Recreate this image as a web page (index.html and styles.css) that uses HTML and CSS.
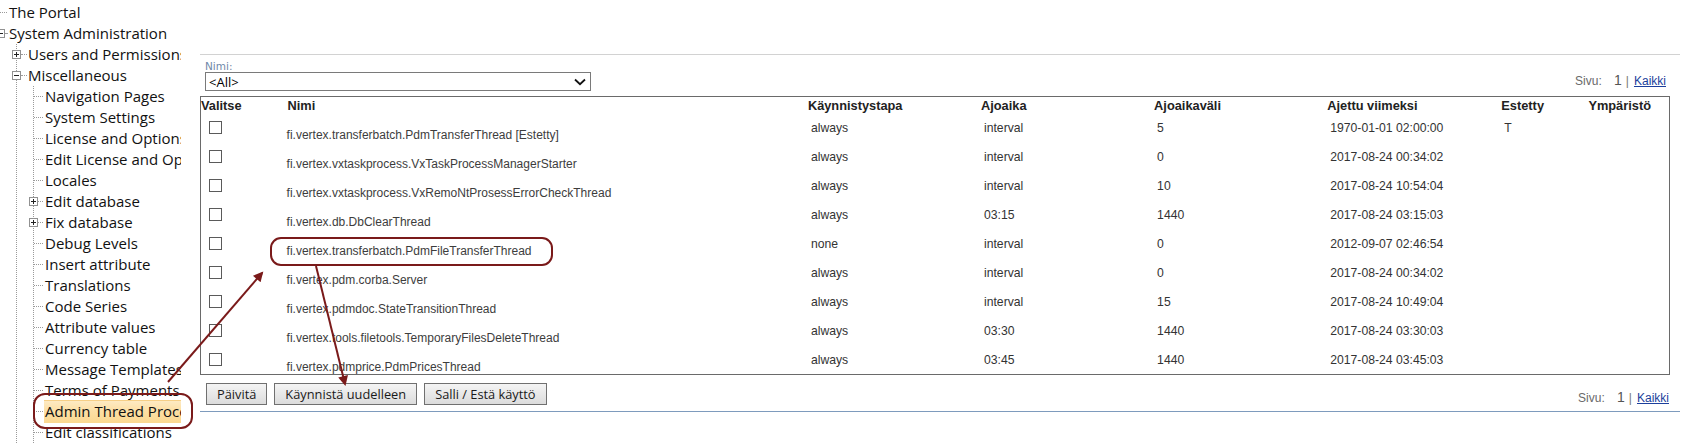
FILE: index.html
```html
<!DOCTYPE html>
<html lang="fi">
<head>
<meta charset="utf-8">
<title>Admin Thread Processes</title>
<link rel="stylesheet" href="styles.css">
</head>
<body>
<div class="page">
  <nav class="tree">
    <div class="row l0"><span class="hline w7"></span><span class="label">The Portal</span></div>
    <div class="row l0"><span class="box minus cut"></span><span class="hline w2"></span><span class="label">System Administration</span></div>
    <div class="group g1">
      <div class="row l1"><span class="box plus"></span><span class="hline w6"></span><span class="label">Users and Permissions</span></div>
      <div class="row l1"><span class="box minus"></span><span class="hline w6"></span><span class="label">Miscellaneous</span></div>
      <div class="group g2">
        <div class="row l2"><span class="hline w9"></span><span class="label">Navigation Pages</span></div>
        <div class="row l2"><span class="hline w9"></span><span class="label">System Settings</span></div>
        <div class="row l2"><span class="hline w9"></span><span class="label">License and Options</span></div>
        <div class="row l2"><span class="hline w9"></span><span class="label">Edit License and Options</span></div>
        <div class="row l2"><span class="hline w9"></span><span class="label">Locales</span></div>
        <div class="row l2b"><span class="box plus"></span><span class="hline w5"></span><span class="label">Edit database</span></div>
        <div class="row l2b"><span class="box plus"></span><span class="hline w5"></span><span class="label">Fix database</span></div>
        <div class="row l2"><span class="hline w9"></span><span class="label">Debug Levels</span></div>
        <div class="row l2"><span class="hline w9"></span><span class="label">Insert attribute</span></div>
        <div class="row l2"><span class="hline w9"></span><span class="label">Translations</span></div>
        <div class="row l2"><span class="hline w9"></span><span class="label">Code Series</span></div>
        <div class="row l2"><span class="hline w9"></span><span class="label">Attribute values</span></div>
        <div class="row l2"><span class="hline w9"></span><span class="label">Currency table</span></div>
        <div class="row l2"><span class="hline w9"></span><span class="label">Message Templates</span></div>
        <div class="row l2"><span class="hline w9"></span><span class="label">Terms of Payments</span></div>
        <div class="row l2"><span class="hline w9"></span><span class="label selected">Admin Thread Processes</span></div>
        <div class="row l2"><span class="hline w9"></span><span class="label">Edit classifications</span></div>
      </div>
    </div>
  </nav>

  <main class="main">
    <div class="rule-top"></div>
    <div class="filter-bar">
      <div class="filter">
        <label class="filter-label">Nimi:</label>
        <div class="select">
          <span>&lt;All&gt;</span>
          <svg class="chevron" width="12" height="8" viewBox="0 0 12 8"><path d="M1 1.5L6 6.2L11 1.5" fill="none" stroke="#111" stroke-width="1.8"/></svg>
        </div>
      </div>
      <div class="pager top">Sivu: <span class="num">1</span><span class="sep">|</span><a href="#">Kaikki</a></div>
    </div>

    <table class="grid">
      <colgroup>
        <col class="c-sel"><col class="c-name"><col class="c-start"><col class="c-time"><col class="c-int"><col class="c-last"><col class="c-dis"><col class="c-env">
      </colgroup>
      <thead>
        <tr><th>Valitse</th><th class="h-name">Nimi</th><th>Käynnistystapa</th><th>Ajoaika</th><th>Ajoaikaväli</th><th>Ajettu viimeksi</th><th>Estetty</th><th>Ympäristö</th></tr>
      </thead>
      <tbody>
        <tr><td class="sel"><input type="checkbox" class="cb"></td><td class="name">fi.vertex.transferbatch.PdmTransferThread [Estetty]</td><td>always</td><td>interval</td><td>5</td><td>1970-01-01 02:00:00</td><td>T</td><td></td></tr>
        <tr><td class="sel"><input type="checkbox" class="cb"></td><td class="name">fi.vertex.vxtaskprocess.VxTaskProcessManagerStarter</td><td>always</td><td>interval</td><td>0</td><td>2017-08-24 00:34:02</td><td></td><td></td></tr>
        <tr><td class="sel"><input type="checkbox" class="cb"></td><td class="name">fi.vertex.vxtaskprocess.VxRemoNtProsessErrorCheckThread</td><td>always</td><td>interval</td><td>10</td><td>2017-08-24 10:54:04</td><td></td><td></td></tr>
        <tr><td class="sel"><input type="checkbox" class="cb"></td><td class="name">fi.vertex.db.DbClearThread</td><td>always</td><td>03:15</td><td>1440</td><td>2017-08-24 03:15:03</td><td></td><td></td></tr>
        <tr><td class="sel"><input type="checkbox" class="cb"></td><td class="name">fi.vertex.transferbatch.PdmFileTransferThread</td><td>none</td><td>interval</td><td>0</td><td>2012-09-07 02:46:54</td><td></td><td></td></tr>
        <tr><td class="sel"><input type="checkbox" class="cb"></td><td class="name">fi.vertex.pdm.corba.Server</td><td>always</td><td>interval</td><td>0</td><td>2017-08-24 00:34:02</td><td></td><td></td></tr>
        <tr><td class="sel"><input type="checkbox" class="cb"></td><td class="name">fi.vertex.pdmdoc.StateTransitionThread</td><td>always</td><td>interval</td><td>15</td><td>2017-08-24 10:49:04</td><td></td><td></td></tr>
        <tr><td class="sel"><input type="checkbox" class="cb"></td><td class="name">fi.vertex.tools.filetools.TemporaryFilesDeleteThread</td><td>always</td><td>03:30</td><td>1440</td><td>2017-08-24 03:30:03</td><td></td><td></td></tr>
        <tr><td class="sel"><input type="checkbox" class="cb"></td><td class="name">fi.vertex.pdmprice.PdmPricesThread</td><td>always</td><td>03:45</td><td>1440</td><td>2017-08-24 03:45:03</td><td></td><td></td></tr>
      </tbody>
    </table>

    <div class="actions">
      <div class="buttons">
        <button class="btn">Päivitä</button>
        <button class="btn">Käynnistä uudelleen</button>
        <button class="btn">Salli / Estä käyttö</button>
      </div>
      <div class="pager bottom">Sivu: <span class="num">1</span><span class="sep">|</span><a href="#">Kaikki</a></div>
    </div>
    <div class="rule-bottom"></div>
  </main>
</div>

<svg class="annot" width="1682" height="448" viewBox="0 0 1682 448">
  <defs>
    <marker id="ah" viewBox="0 0 10 10" refX="8" refY="5" markerWidth="6" markerHeight="5" orient="auto">
      <path d="M0 0L10 5L0 10z" fill="#7a1a1a"/>
    </marker>
  </defs>
  <rect x="34" y="394" width="158" height="34" rx="11" fill="none" stroke="#7a1a1a" stroke-width="2"/>
  <rect x="271" y="238" width="281" height="27" rx="10" fill="none" stroke="#7a1a1a" stroke-width="2"/>
  <line x1="168" y1="382" x2="262" y2="273" stroke="#7a1a1a" stroke-width="2" marker-end="url(#ah)"/>
  <line x1="316" y1="266" x2="345" y2="384" stroke="#7a1a1a" stroke-width="2" marker-end="url(#ah)"/>
</svg>
</body>
</html>
```

FILE: styles.css
```css
html, body {
  margin: 0;
  padding: 0;
  background: #fff;
}

body {
  width: 1682px;
  height: 448px;
  overflow: hidden;
  position: relative;
  font-family: "Liberation Sans", Arial, sans-serif;
}

.page {
  display: flex;
  align-items: flex-start;
}

/* ---------- tree ---------- */
.tree {
  width: 181px;
  flex: none;
  overflow: hidden;
  padding-top: 2px;
  font-family: "Open Sans", "Noto Sans", sans-serif;
  font-size: 15px;
  color: #111;
}

.row {
  display: flex;
  align-items: center;
  height: 21px;
  white-space: nowrap;
}

.l0 { padding-left: 0; }
.l1 { padding-left: 12px; }
.l2 { padding-left: 34px; }
.l2b { padding-left: 29px; }

.label {
  line-height: 21px;
}

.hline {
  flex: none;
  height: 0;
  border-top: 1px dotted #9a9a9a;
  margin-right: 2px;
}
.w2 { width: 2px; }
.w5 { width: 5px; }
.w6 { width: 6px; margin-right: 1px; }
.w7 { width: 7px; }
.w9 { width: 9px; }

.box {
  flex: none;
  position: relative;
  box-sizing: border-box;
  width: 9px;
  height: 9px;
  border: 1px solid #919191;
  background: #fff;
}
.box.cut { margin-left: -4px; }
.box::before {
  content: "";
  position: absolute;
  left: 1px;
  top: 3px;
  width: 5px;
  height: 1px;
  background: #222;
}
.box.plus::after {
  content: "";
  position: absolute;
  left: 3px;
  top: 1px;
  width: 1px;
  height: 5px;
  background: #222;
}

.group {
  background-repeat: no-repeat;
  background-size: 1px 100%;
  background-image: repeating-linear-gradient(to bottom, #9a9a9a 0 1px, transparent 1px 2px);
}
.g1 { background-position: 16px 0; }
.g2 { background-position: 33px 0; }

.label.selected {
  display: inline-block;
  height: 23px;
  line-height: 23px;
  margin-left: -1px;
  padding-left: 1px;
  background: linear-gradient(to bottom, #fdebc6 0%, #fde0a6 45%, #fbd890 100%);
  box-shadow: inset 0 1px 0 #f6cf86;
}

/* ---------- main ---------- */
.main {
  flex: 1;
  min-width: 0;
  padding: 0 2px 0 19px;
}

.rule-top {
  margin-top: 54px;
  border-top: 1px solid #d2d2d2;
}

.filter-bar {
  display: flex;
  justify-content: space-between;
  align-items: flex-start;
  height: 41px;
}

.filter {
  padding: 5px 0 0 5px;
}

.filter-label {
  display: block;
  font-family: "DejaVu Sans", sans-serif;
  font-size: 10.5px;
  line-height: 12px;
  color: #6f88a8;
}

.select {
  box-sizing: border-box;
  width: 386px;
  height: 19px;
  border: 1px solid #7a7a7a;
  display: flex;
  align-items: center;
  justify-content: space-between;
  padding: 0 4px 0 3px;
  font-family: "Open Sans", sans-serif;
  font-size: 13px;
  color: #000;
  background: #fff;
}

.pager {
  font-size: 12px;
  line-height: 16px;
  color: #6a6a6a;
  white-space: nowrap;
}
.pager.top { margin-top: 17px; margin-right: 14px; }
.pager.bottom { margin-top: 6px; margin-right: 11px; }
.pager .num {
  font-size: 14px;
  color: #555;
  margin-left: 9px;
}
.pager .sep {
  margin: 0 5px 0 4px;
  color: #777;
}
.pager a {
  color: #1c3f9c;
  text-decoration: underline;
}

/* ---------- table ---------- */
.grid {
  width: 1470px;
  border-collapse: collapse;
  table-layout: fixed;
  border: 1px solid #6a6a6a;
  font-size: 12px;
  color: #333;
}

.c-sel { width: 86px; }
.c-name { width: 521px; }
.c-start { width: 173px; }
.c-time { width: 173px; }
.c-int { width: 173px; }
.c-last { width: 174px; }
.c-dis { width: 87px; }
.c-env { width: 81px; }

.grid th {
  text-align: left;
  font-weight: bold;
  font-size: 12.8px;
  color: #222;
  height: 16px;
  padding: 0;
  white-space: nowrap;
  vertical-align: middle;
}
.grid th.h-name { padding-left: 1px; }

.grid td {
  height: 29px;
  padding: 0 0 0 3px;
  vertical-align: middle;
  white-space: nowrap;
  font-size: 12.2px;
}

.grid td.sel { padding-left: 8px; }
.grid td.name {
  padding: 14px 0 0 0;
  color: #3d3d3d;
  font-size: 12px;
  box-sizing: border-box;
}

.cb {
  appearance: none;
  -webkit-appearance: none;
  display: block;
  margin: 0;
  width: 13px;
  height: 13px;
  border: 1px solid #5a5a5a;
  background: #fff;
  box-sizing: border-box;
}

/* ---------- actions ---------- */
.actions {
  display: flex;
  justify-content: space-between;
  align-items: flex-start;
  margin-top: 8px;
  height: 28px;
}

.buttons {
  display: flex;
  gap: 7px;
  margin-left: 6px;
}

.btn {
  height: 22px;
  padding: 0 10px;
  border: 1px solid #707070;
  border-radius: 0;
  background: linear-gradient(to bottom, #f4f4f4 0%, #e8e8e8 50%, #dcdcdc 100%);
  font-family: "Open Sans", sans-serif;
  font-size: 12.8px;
  color: #1a1a1a;
  line-height: 20px;
}

.rule-bottom {
  border-top: 1px solid #7e9bbd;
}

/* ---------- annotations ---------- */
.annot {
  position: absolute;
  left: 0;
  top: 0;
  pointer-events: none;
}
```
